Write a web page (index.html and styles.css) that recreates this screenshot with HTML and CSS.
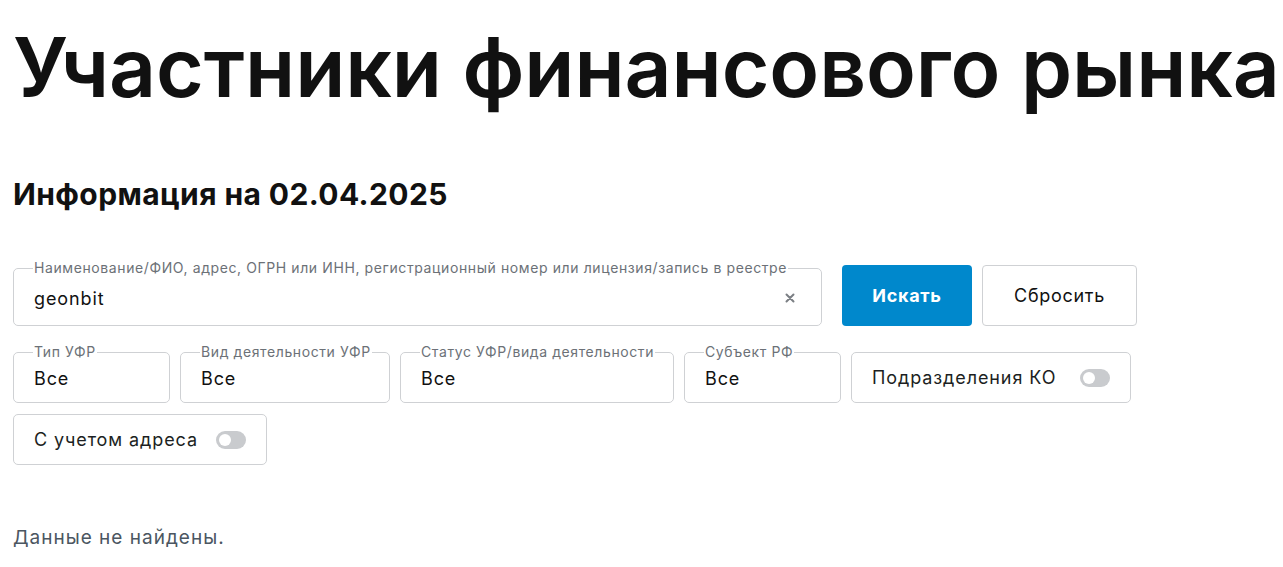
FILE: index.html
```html
<!DOCTYPE html>
<html lang="ru">
<head>
    <meta charset="UTF-8">
    <meta name="viewport" content="width=device-width, initial-scale=1.0">
    <title>Участники финансового рынка</title>
    <link rel="stylesheet" href="styles.css">
</head>
<body>
    <div class="page">
        <h1 class="page-title">Участники финансового рынка</h1>
        <h2 class="info-date">Информация на 02.04.2025</h2>

        <form class="filters">
            <div class="search-row">
                <fieldset class="field field-search">
                    <legend>Наименование/ФИО, адрес, ОГРН или ИНН, регистрационный номер или лицензия/запись в реестре</legend>
                    <span class="field-value">geonbit</span>
                    <svg class="clear-icon" width="10" height="10" viewBox="0 0 10 10">
                        <path d="M1.5 1.5 L8.5 8.5 M8.5 1.5 L1.5 8.5" stroke="#7b7f84" stroke-width="2" stroke-linecap="round"/>
                    </svg>
                </fieldset>
                <button type="button" class="btn btn-primary">Искать</button>
                <button type="button" class="btn btn-secondary">Сбросить</button>
            </div>

            <div class="select-row">
                <fieldset class="field field-type">
                    <legend>Тип УФР</legend>
                    <span class="field-value">Все</span>
                </fieldset>
                <fieldset class="field field-activity">
                    <legend>Вид деятельности УФР</legend>
                    <span class="field-value">Все</span>
                </fieldset>
                <fieldset class="field field-status">
                    <legend>Статус УФР/вида деятельности</legend>
                    <span class="field-value">Все</span>
                </fieldset>
                <fieldset class="field field-region">
                    <legend>Субъект РФ</legend>
                    <span class="field-value">Все</span>
                </fieldset>
                <div class="switch-box switch-ko">
                    <span>Подразделения КО</span>
                    <span class="switch"></span>
                </div>
            </div>

            <div class="option-row">
                <div class="switch-box switch-address">
                    <span>С учетом адреса</span>
                    <span class="switch"></span>
                </div>
            </div>
        </form>

        <p class="empty-result">Данные не найдены.</p>
    </div>
</body>
</html>
```

FILE: styles.css
```css
body {
    margin: 0;
    font-family: Inter, "Noto Sans", Arial, sans-serif;
    color: #111;
    background-color: #fff;
}

.page {
    padding: 0 13px;
}

.page-title {
    margin: 18px 0 0;
    font-size: 82px;
    font-weight: 600;
    line-height: 100px;
    letter-spacing: -0.1px;
    white-space: nowrap;
}

.info-date {
    margin: 58px 0 0;
    font-size: 30px;
    font-weight: 700;
    line-height: 36px;
    letter-spacing: 0.4px;
}

.filters {
    margin-top: 53px;
}

.search-row,
.select-row {
    display: flex;
    gap: 10px;
}

.search-row {
    align-items: flex-start;
}

.select-row {
    margin-top: 19px;
    align-items: flex-end;
}

.option-row {
    margin-top: 11px;
    display: flex;
}

.field {
    position: relative;
    min-width: 0;
    margin: 0;
    padding: 0 20px;
    border: 1px solid #cfd1d4;
    border-radius: 5px;
    display: flex;
    align-items: center;
    box-sizing: border-box;
}

.field legend {
    padding: 0 1px;
    margin-left: -1px;
    font-size: 14px;
    line-height: 14px;
    letter-spacing: 0.6px;
    color: #6c7177;
    white-space: nowrap;
}

.field-value {
    font-size: 18px;
    letter-spacing: 0.9px;
    color: #111;
}

.field-search {
    width: 809px;
    height: 65px;
    margin-top: -4px;
    padding-bottom: 4px;
}

.clear-icon {
    position: absolute;
    right: 26px;
    top: 18px;
}

.btn {
    height: 61px;
    border-radius: 4px;
    font-family: inherit;
    font-size: 18px;
    letter-spacing: 0.7px;
    cursor: pointer;
}

.btn-primary {
    width: 130px;
    margin-left: 10px;
    border: none;
    background-color: #0088cc;
    color: #fff;
    font-weight: 700;
}

.btn-secondary {
    width: 155px;
    border: 1px solid #cfd1d4;
    background-color: #fff;
    color: #111;
}

.select-row .field {
    height: 58px;
    padding-bottom: 4px;
}

.field-type {
    width: 157px;
}

.field-activity {
    width: 210px;
}

.field-status {
    width: 274px;
}

.field-region {
    width: 157px;
}

.switch-box {
    height: 51px;
    box-sizing: border-box;
    padding: 0 20px;
    border: 1px solid #cfd1d4;
    border-radius: 5px;
    display: flex;
    align-items: center;
    justify-content: space-between;
    font-size: 18px;
    letter-spacing: 0.9px;
    color: #1c1f22;
}

.switch-ko {
    width: 280px;
}

.switch-address {
    width: 254px;
}

.switch {
    position: relative;
    width: 30px;
    height: 18px;
    border-radius: 9px;
    background-color: #c9cbce;
}

.switch::after {
    content: "";
    position: absolute;
    left: 3px;
    top: 3px;
    width: 12px;
    height: 12px;
    border-radius: 50%;
    background-color: #fff;
}

.empty-result {
    margin: 61px 0 0;
    font-size: 19px;
    letter-spacing: 1px;
    color: #4b5661;
}
```
